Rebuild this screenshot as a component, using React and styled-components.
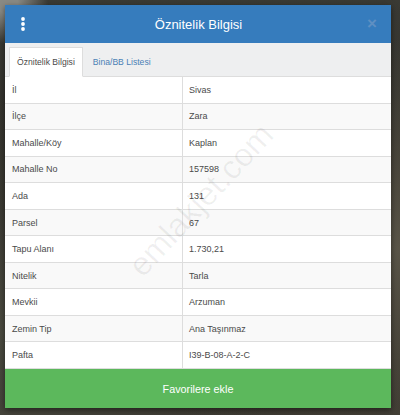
import React from 'react';
import styled, { createGlobalStyle } from 'styled-components';

const rows = [
  ['İl', 'Sivas'],
  ['İlçe', 'Zara'],
  ['Mahalle/Köy', 'Kaplan'],
  ['Mahalle No', '157598'],
  ['Ada', '131'],
  ['Parsel', '67'],
  ['Tapu Alanı', '1.730,21'],
  ['Nitelik', 'Tarla'],
  ['Mevkii', 'Arzuman'],
  ['Zemin Tip', 'Ana Taşınmaz'],
  ['Pafta', 'I39-B-08-A-2-C'],
];

function App() {
  return (
    <StyledRoot>
      <GlobalStyle />
      <Modal>
        <Header>
          <MenuButton aria-label="menu">
            <svg width="6" height="14" viewBox="0 0 6 14">
              <circle cx="3" cy="2" r="1.9" fill="#fff" />
              <circle cx="3" cy="7" r="1.9" fill="#fff" />
              <circle cx="3" cy="12" r="1.9" fill="#fff" />
            </svg>
          </MenuButton>
          <Title>Öznitelik Bilgisi</Title>
          <Close>×</Close>
        </Header>
        <Tabs>
          <Tab $active>Öznitelik Bilgisi</Tab>
          <Tab>Bina/BB Listesi</Tab>
        </Tabs>
        <Table>
          {rows.map(([label, value], i) => (
            <Row key={label} $striped={i % 2 === 1}>
              <Cell>{label}</Cell>
              <Cell $value>{value}</Cell>
            </Row>
          ))}
          <Watermark>emlakjet.com</Watermark>
        </Table>
        <AddButton>Favorilere ekle</AddButton>
      </Modal>
    </StyledRoot>
  );
}

export default App;

const GlobalStyle = createGlobalStyle`
  body {
    margin: 0;
    font-family: "Liberation Sans", Arial, sans-serif;
  }
`;

const StyledRoot = styled.div`
  width: 400px;
  height: 415px;
  overflow: hidden;
  padding: 5px 9px 0 5px;
  box-sizing: border-box;
  background:
    radial-gradient(circle at 2% 1%, #8a8a84 0, #8a8a84 10px, transparent 40px),
    radial-gradient(ellipse at 100% 60%, #5a5548 0, transparent 60%),
    radial-gradient(ellipse at 0% 80%, #4a4a40 0, transparent 50%),
    linear-gradient(180deg, #3a3a34 0%, #2f2d28 50%, #3b3830 100%);
`;

const Modal = styled.div`
  width: 386px;
  display: flex;
  flex-direction: column;
  background: #fff;
  box-shadow: 0 2px 6px rgba(0, 0, 0, 0.5);
`;

const Header = styled.div`
  height: 38px;
  background: #367cbd;
  display: flex;
  align-items: center;
  padding: 0 12px 0 15px;
`;

const MenuButton = styled.div`
  width: 12px;
  display: flex;
  align-items: center;
  margin-top: -1px;
`;

const Title = styled.div`
  flex: 1;
  text-align: center;
  color: #fff;
  font-size: 13px;
  padding-right: 2px;
`;

const Close = styled.div`
  width: 12px;
  color: #5e8fc2;
  font-size: 17px;
  font-weight: bold;
  line-height: 1;
  margin-top: -1px;
`;

const Tabs = styled.div`
  height: 34px;
  box-sizing: border-box;
  background: #eeeff0;
  display: flex;
  align-items: flex-end;
  padding-left: 4px;
  border-bottom: 1px solid #dddddd;
`;

const Tab = styled.div`
  height: 30px;
  box-sizing: border-box;
  display: flex;
  align-items: center;
  padding: 0 7px;
  margin-right: 2px;
  margin-bottom: -1px;
  font-size: 8.6px;
  color: ${(p) => (p.$active ? '#4a4a4a' : '#4a7fb5')};
  background: ${(p) => (p.$active ? '#fff' : 'transparent')};
  border: 1px solid ${(p) => (p.$active ? '#dddddd' : 'transparent')};
  border-bottom-color: ${(p) => (p.$active ? '#fff' : 'transparent')};
`;

const Table = styled.div`
  position: relative;
  overflow: hidden;
`;

const Row = styled.div`
  display: grid;
  grid-template-columns: 177px 1fr;
  height: 26.55px;
  box-sizing: border-box;
  border-bottom: 1px solid #dddddd;
  background: ${(p) => (p.$striped ? '#f9f9f9' : '#fff')};
`;

const Cell = styled.div`
  display: flex;
  align-items: center;
  padding-left: ${(p) => (p.$value ? '6px' : '7px')};
  font-size: 9px;
  color: #4a4a4a;
  border-left: ${(p) => (p.$value ? '1px solid #dddddd' : 'none')};
`;

const Watermark = styled.div`
  position: absolute;
  left: 96px;
  top: 104px;
  width: 200px;
  text-align: center;
  transform: rotate(-47deg);
  font-size: 33px;
  line-height: 38px;
  color: rgba(0, 0, 0, 0.06);
  pointer-events: none;
`;

const AddButton = styled.div`
  height: 39px;
  background: #5cb85c;
  color: #fff;
  font-size: 10.8px;
  display: flex;
  align-items: center;
  justify-content: center;
`;
